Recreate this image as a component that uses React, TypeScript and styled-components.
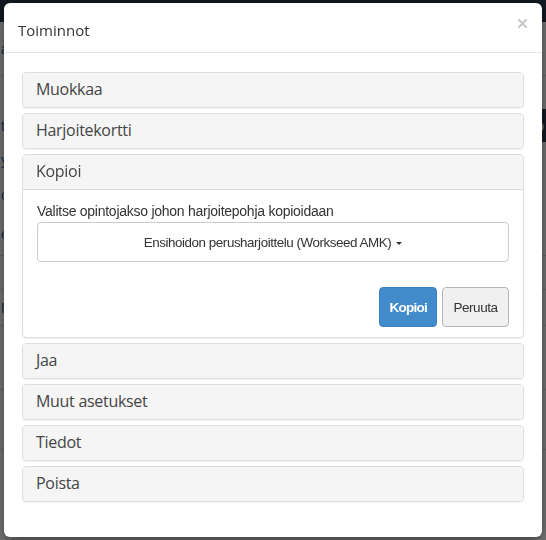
import React from "react";
import styled, { createGlobalStyle } from "styled-components";

const GlobalStyle = createGlobalStyle`
  html, body {
    margin: 0;
    padding: 0;
    height: 100%;
    overflow: hidden;
  }
  body {
    font-family: "Liberation Sans", Arial, sans-serif;
    background: #eeeeee;
  }
  * { box-sizing: border-box; }
`;

/* ---------- page behind the modal ---------- */
const Page = styled.div`
  width: 546px;
  height: 540px;
  display: flex;
  flex-direction: column;
  background: #f2f2f2;
  font-family: "Liberation Sans", Arial, sans-serif;
  font-size: 14px;
  color: #333;
`;

const PageNav = styled.div`
  height: 22px;
  background: #263443;
`;

const PageRow = styled.div<{ $h: number; $line?: boolean }>`
  height: ${(p) => p.$h}px;
  display: flex;
  align-items: center;
  justify-content: space-between;
  padding: 0 0 0 1px;
  border-bottom: ${(p) => (p.$line ? "1px solid #cfcfcf" : "none")};
  color: #2a6aa8;
`;

const DarkBand = styled.div`
  width: 40px;
  height: 33px;
  background: #2b3a4a;
  color: #fff;
  display: flex;
  align-items: center;
  justify-content: flex-end;
  padding-right: 2px;
`;

/* ---------- modal ---------- */
const Backdrop = styled.div`
  position: fixed;
  inset: 0;
  background: rgba(0, 0, 0, 0.5);
  display: flex;
  justify-content: center;
  align-items: flex-start;
`;

const Dialog = styled.div`
  width: 538px;
  height: 534px;
  margin-top: 3px;
  background: #fff;
  border-radius: 6px;
  box-shadow: 0 5px 15px rgba(0, 0, 0, 0.5);
  display: flex;
  flex-direction: column;
  overflow: hidden;
`;

const Header = styled.div`
  display: flex;
  justify-content: space-between;
  align-items: flex-start;
  padding: 17px 15px 12px 14px;
  border-bottom: 1px solid #e5e5e5;
`;

const Title = styled.h4`
  margin: 0;
  font-family: "Open Sans", "Noto Sans", sans-serif;
  font-weight: 400;
  font-size: 15px;
  line-height: 20px;
  color: #333;
`;

const CloseButton = styled.button`
  width: 9px;
  height: 9px;
  margin-top: -1px;
  padding: 0;
  border: 0;
  background: transparent;
  display: flex;
  cursor: pointer;
`;

const Body = styled.div`
  padding: 19px 18px 36px;
  display: flex;
  flex-direction: column;
  gap: 5px;
`;

const Panel = styled.div`
  border: 1px solid #dddddd;
  border-radius: 4px;
  background: #fff;
  overflow: hidden;
  box-shadow: 0 1px 1px rgba(0, 0, 0, 0.05);
`;

const PanelHeading = styled.div`
  background: #f5f5f5;
  padding: 7px 13px 9px;
  font-family: "Open Sans", "Noto Sans", sans-serif;
  font-size: 16px;
  letter-spacing: -0.3px;
  line-height: 18px;
  color: #444;
`;

const PanelBody = styled.div`
  border-top: 1px solid #dddddd;
  padding: 11px 14px 10px;
  display: flex;
  flex-direction: column;
`;

const Label = styled.div`
  font-family: "Liberation Sans", Arial, sans-serif;
  font-size: 14px;
  letter-spacing: -0.26px;
  line-height: 20px;
  color: #333;
  margin-bottom: 1px;
`;

const SelectBox = styled.div`
  height: 40px;
  border: 1px solid #cccccc;
  border-radius: 4px;
  background: #fff;
  display: flex;
  align-items: center;
  justify-content: center;
  padding-top: 1px;
  font-family: "Liberation Sans", Arial, sans-serif;
  font-size: 13.4px;
  letter-spacing: -0.45px;
  color: #333;
`;

const Caret = styled.span`
  display: inline-block;
  width: 0;
  height: 0;
  margin-left: 5px;
  margin-top: 2px;
  border-top: 3px solid #333;
  border-left: 3px solid transparent;
  border-right: 3px solid transparent;
`;

const Actions = styled.div`
  display: flex;
  justify-content: flex-end;
  gap: 4.6px;
  margin-top: 25px;
`;

const Button = styled.button<{ $primary?: boolean; $w: number }>`
  width: ${(p) => p.$w}px;
  height: 40px;
  padding: 0;
  border-radius: 4px;
  border: 1px solid ${(p) => (p.$primary ? "#3a7fc1" : "#b5b5b5")};
  background: ${(p) => (p.$primary ? "#428bca" : "#f0f0f0")};
  color: ${(p) => (p.$primary ? "#fff" : "#333")};
  font-family: "Liberation Sans", Arial, sans-serif;
  font-size: 13.5px;
  letter-spacing: ${(p) => (p.$primary ? "-0.75px" : "-0.45px")};
  font-weight: ${(p) => (p.$primary ? 700 : 400)};
  cursor: pointer;
`;

const sections = ["Muokkaa", "Harjoitekortti", "Kopioi", "Jaa", "Muut asetukset", "Tiedot", "Poista"];

export default function App() {
  return (
    <>
      <GlobalStyle />
      <Page>
        <PageNav />
        <PageRow $h={54} $line>a</PageRow>
        <PageRow $h={33} />
        <PageRow $h={33}>
          <span>t</span>
          <DarkBand>p</DarkBand>
        </PageRow>
        <PageRow $h={36}>y</PageRow>
        <PageRow $h={34}>o</PageRow>
        <PageRow $h={44} $line>e</PageRow>
        <PageRow $h={34} $line />
        <PageRow $h={36} $line>M</PageRow>
        <PageRow $h={64} $line />
        <PageRow $h={60} $line />
      </Page>
      <Backdrop>
        <Dialog role="dialog" aria-label="Toiminnot">
          <Header>
            <Title>Toiminnot</Title>
            <CloseButton aria-label="Sulje">
              <svg width="9" height="9" viewBox="0 0 9 9">
                <path d="M1 1 L8 8 M8 1 L1 8" stroke="#c9c9c9" strokeWidth="2.2" strokeLinecap="square" />
              </svg>
            </CloseButton>
          </Header>
          <Body>
            {sections.map((s) => (
              <Panel key={s}>
                <PanelHeading>{s}</PanelHeading>
                {s === "Kopioi" && (
                  <PanelBody>
                    <Label>Valitse opintojakso johon harjoitepohja kopioidaan</Label>
                    <SelectBox>
                      Ensihoidon perusharjoittelu (Workseed AMK)
                      <Caret />
                    </SelectBox>
                    <Actions>
                      <Button $primary $w={58.4}>Kopioi</Button>
                      <Button $w={67}>Peruuta</Button>
                    </Actions>
                  </PanelBody>
                )}
              </Panel>
            ))}
          </Body>
        </Dialog>
      </Backdrop>
    </>
  );
}
